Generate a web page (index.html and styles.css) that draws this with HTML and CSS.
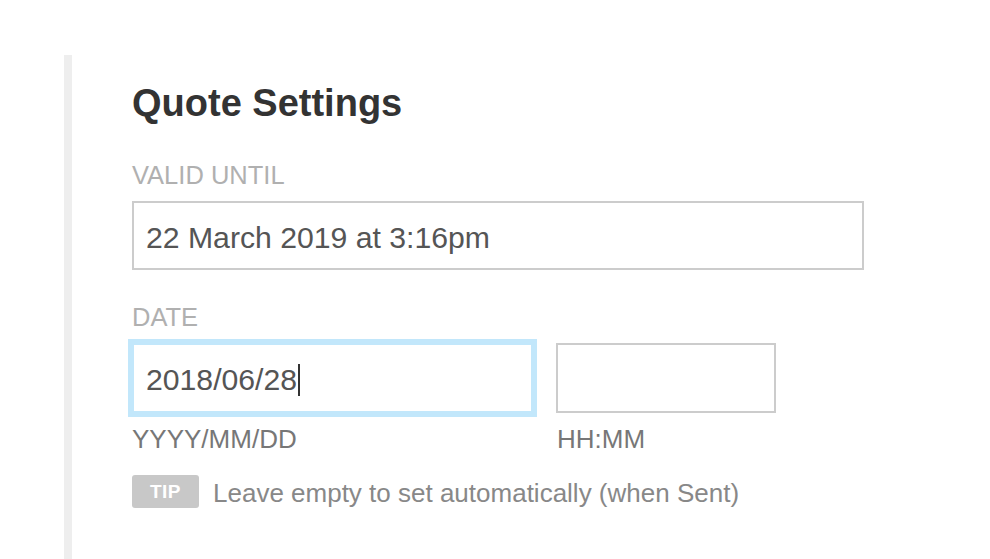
FILE: index.html
```html
<!DOCTYPE html>
<html lang="en">
<head>
<meta charset="utf-8">
<title>Quote Settings</title>
<link rel="stylesheet" href="styles.css">
</head>
<body>
<div class="page">
  <section class="panel">
    <h1 class="title">Quote Settings</h1>

    <div class="field">
      <div class="label">VALID UNTIL</div>
      <div class="input input-wide">22 March 2019 at 3:16pm</div>
    </div>

    <div class="field field-date">
      <div class="label">DATE</div>
      <div class="date-row">
        <div class="date-col">
          <div class="input input-date focused">2018/06/28<span class="caret"></span></div>
          <div class="hint">YYYY/MM/DD</div>
        </div>
        <div class="time-col">
          <div class="input input-time"></div>
          <div class="hint">HH:MM</div>
        </div>
      </div>
      <div class="tip-row">
        <span class="tip-badge">TIP</span>
        <span class="tip-text">Leave empty to set automatically (when Sent)</span>
      </div>
    </div>
  </section>
</div>
</body>
</html>
```

FILE: styles.css
```css
html, body {
  margin: 0;
  padding: 0;
  background: #ffffff;
}

body {
  font-family: "Liberation Sans", Arial, Helvetica, sans-serif;
}

.page {
  padding-top: 55px;
  padding-left: 64px;
  height: 559px;
  box-sizing: border-box;
  overflow: hidden;
}

.panel {
  border-left: 8px solid #eeeeee;
  padding-left: 60px;
  padding-top: 26px;
  min-height: 504px;
  box-sizing: border-box;
}

.title {
  margin: 0;
  font-size: 38px;
  line-height: 44px;
  font-weight: 700;
  color: #333333;
}

.field {
  margin-top: 35px;
}

.field-date {
  margin-top: 32px;
}

.label {
  font-size: 25.5px;
  line-height: 30px;
  color: #b0b0b0;
  margin-bottom: 11px;
}

.input {
  box-sizing: border-box;
  border: 2px solid #cccccc;
  background: #ffffff;
  height: 69px;
  padding: 4px 12px 0;
  display: flex;
  align-items: center;
  font-size: 30.2px;
  line-height: 34px;
  color: #555555;
}

.input-wide {
  width: 732px;
}

.date-row {
  display: flex;
  gap: 23px;
}

.input-date {
  width: 401px;
  height: 70px;
}

.focused {
  border-color: #c2e7fb;
  box-shadow: 0 0 0 4px #c2e7fb;
}

.caret {
  display: inline-block;
  width: 2px;
  height: 32px;
  background: #333333;
  margin-left: 1px;
  margin-bottom: 1px;
}

.input-time {
  width: 220px;
  height: 70px;
}

.hint {
  margin-top: 11px;
  font-size: 26px;
  line-height: 30px;
  color: #777777;
}

.time-col .hint {
  padding-left: 1px;
}

.tip-row {
  margin-top: 21px;
  display: flex;
  align-items: center;
  gap: 14px;
}

.tip-badge {
  box-sizing: border-box;
  width: 67px;
  height: 33px;
  border-radius: 3px;
  background: #c8c8c8;
  color: #ffffff;
  font-weight: 700;
  font-size: 19px;
  letter-spacing: 0.5px;
  display: flex;
  align-items: center;
  justify-content: center;
  padding-top: 1px;
}

.tip-text {
  font-size: 26px;
  line-height: 30px;
  color: #888888;
  padding-top: 3px;
}
```
